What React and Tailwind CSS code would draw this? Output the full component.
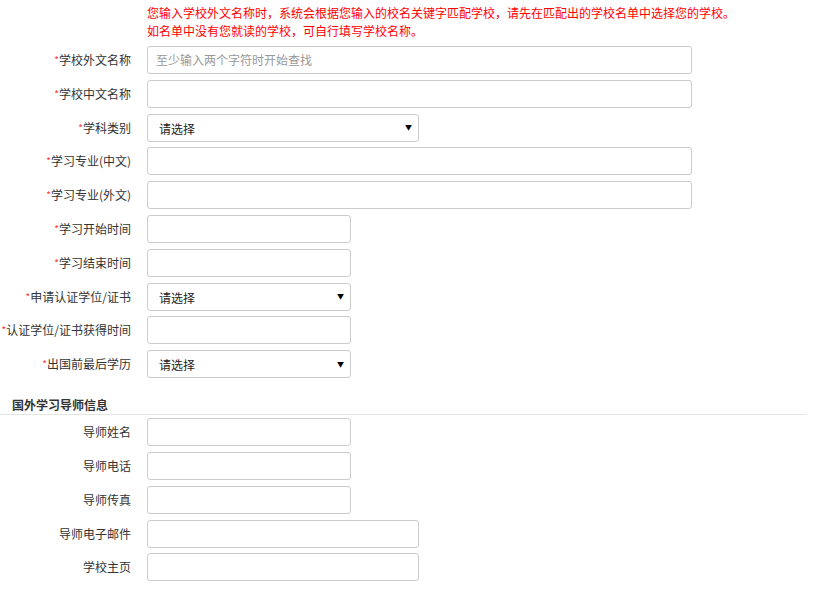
import React from "react";

const font = { fontFamily: '"Microsoft YaHei", "Noto Sans CJK SC", "Liberation Sans", sans-serif' };

function Label({ text, required }) {
  return (
    <div className="w-[131px] shrink-0 text-right text-[12px] text-[#333] leading-[28px] whitespace-nowrap">
      {required && <span className="text-[#f33] text-[10px] align-top">*</span>}
      {text}
    </div>
  );
}

function Field({ label, required, width = "w-[545px]", placeholder, select }) {
  return (
    <div className="flex items-center h-[28px] mb-[5.8px]">
      <Label text={label} required={required} />
      <div className="ml-[16px]">
        {select ? (
          <div
            className={`${width} h-[28px] border border-[#ccc] rounded-[3px] bg-white flex items-center justify-between pl-[11px] pr-[6px] text-[12px] text-[#222]`}
          >
            <span className="mt-[2px]">请选择</span>
            <span className="text-[7px] text-black">▼</span>
          </div>
        ) : (
          <div
            className={`${width} h-[28px] border border-[#ccc] rounded-[3px] bg-white flex items-center px-[8px] text-[12px] text-[#999]`}
          >
            {placeholder}
          </div>
        )}
      </div>
    </div>
  );
}

export default function App() {
  const main = [
    { label: "学校外文名称", placeholder: "至少输入两个字符时开始查找" },
    { label: "学校中文名称" },
    { label: "学科类别", select: true, width: "w-[272px]" },
    { label: "学习专业(中文)" },
    { label: "学习专业(外文)" },
    { label: "学习开始时间", width: "w-[204px]" },
    { label: "学习结束时间", width: "w-[204px]" },
    { label: "申请认证学位/证书", select: true, width: "w-[204px]" },
    { label: "认证学位/证书获得时间", width: "w-[204px]" },
    { label: "出国前最后学历", select: true, width: "w-[204px]" },
  ];
  const tutor = [
    { label: "导师姓名", width: "w-[204px]" },
    { label: "导师电话", width: "w-[204px]" },
    { label: "导师传真", width: "w-[204px]" },
    { label: "导师电子邮件", width: "w-[272px]" },
    { label: "学校主页", width: "w-[272px]" },
  ];

  return (
    <div className="w-[814px] h-[590px] bg-white overflow-hidden" style={font}>
      <div className="pl-[147px] pt-[4px] text-[12px] leading-[18px] text-[#f00]">
        <p>您输入学校外文名称时，系统会根据您输入的校名关键字匹配学校，请先在匹配出的学校名单中选择您的学校。</p>
        <p>如名单中没有您就读的学校，可自行填写学校名称。</p>
      </div>
      <div className="mt-[6px]">
        {main.map((f) => (
          <Field key={f.label} required {...f} />
        ))}
      </div>
      <div className="w-[807px] mt-[18px] border-b border-[#e5e5e5] pl-[12px] text-[12px] font-semibold text-[#333] leading-[18px]">
        国外学习导师信息
      </div>
      <div className="mt-[3px]">
        {tutor.map((f) => (
          <Field key={f.label} {...f} />
        ))}
      </div>
    </div>
  );
}
